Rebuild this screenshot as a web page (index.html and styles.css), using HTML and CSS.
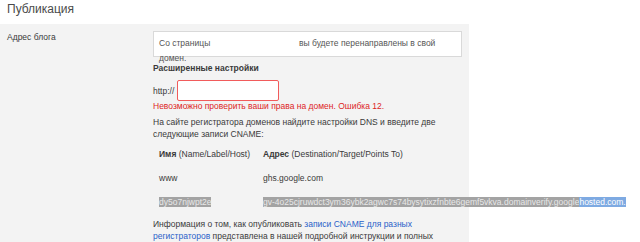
FILE: index.html
```html
<!DOCTYPE html>
<html lang="ru">
<head>
    <meta charset="UTF-8">
    <title>Публикация</title>
    <link rel="stylesheet" href="styles.css">
</head>
<body>
    <h1 class="page-title">Публикация</h1>

    <div class="panel">
        <div class="panel-label">Адрес блога</div>
        <div class="panel-body">
            <div class="redirect-box">
                Со страницы <span class="hidden-url"></span> вы будете перенаправлены в свой домен.
            </div>

            <div class="section-title">Расширенные настройки</div>

            <div class="domain-row">
                <span>http://</span>
                <input type="text" class="domain-input" value="">
            </div>
            <div class="error">Невозможно проверить ваши права на домен. Ошибка 12.</div>

            <p class="hint">На сайте регистратора доменов найдите настройки DNS и введите две следующие записи CNAME:</p>

            <div class="cname">
                <div><b>Имя</b> (Name/Label/Host)</div>
                <div><b>Адрес</b> (Destination/Target/Points To)</div>

                <div>www</div>
                <div>ghs.google.com</div>

                <div><span class="sel">dy5o7njwpt2e</span></div>
                <div><span class="sel">gv-4o25cjruwdct3ym36ybk2agwc7s74bysytixzfnbte6gemf5vkva.domainverify.google</span><span class="sel-active">hosted.com.</span></div>
            </div>

            <p class="info">Информация о том, как опубликовать <a href="#">записи CNAME для разных регистраторов</a> представлена в нашей подробной инструкции и полных</p>
        </div>
    </div>
</body>
</html>
```

FILE: styles.css
```css
body {
    margin: 0;
    font-family: 'Liberation Sans', Arial, sans-serif;
    font-size: 8.5px;
    color: #3a3a3a;
    background: #fff;
    overflow: hidden;
}

.page-title {
    margin: 0;
    padding: 1px 0 0 7px;
    height: 23px;
    line-height: 16px;
    font-size: 12px;
    font-weight: normal;
    color: #4a4a4a;
}

.panel {
    display: flex;
    width: 469px;
    background: #f3f3f3;
    padding-top: 7px;
    height: 300px;
}

.panel-label {
    flex: 0 0 153px;
    padding-left: 7px;
    line-height: 13px;
    box-sizing: border-box;
}

.panel-body {
    flex: 0 0 309px;
    min-width: 0;
}

.redirect-box {
    height: 26px;
    background: #fff;
    border: 1px solid #d9d9d9;
    padding: 4px 8px 0 5px;
    box-sizing: border-box;
    line-height: 15px;
    color: #555;
}

.hidden-url {
    display: inline-block;
    width: 84px;
    height: 10px;
}

.section-title {
    margin-top: 5px;
    line-height: 13px;
    font-weight: bold;
}

.domain-row {
    display: flex;
    align-items: center;
    gap: 3px;
    margin-top: 5px;
}

.domain-input {
    width: 102px;
    height: 21px;
    box-sizing: border-box;
    border: 1px solid #f15b5b;
    border-radius: 2px;
    padding: 0 4px;
    font: inherit;
}

.error {
    color: #dd1f1f;
    line-height: 12px;
    margin-top: -1px;
}

.hint {
    margin: 4px 0 0;
    line-height: 12px;
}

.cname {
    display: grid;
    grid-template-columns: 104px max-content;
    grid-auto-rows: 24px;
    align-items: center;
    padding-left: 6px;
    margin-top: 2px;
    white-space: nowrap;
}

.sel {
    background: #a3a3a3;
    color: #e8e8e8;
}

.sel-active {
    background: #7eaae2;
    color: #fff;
}

.info {
    margin: 4px 0 0;
    line-height: 12px;
}

.info a {
    color: #2a62c9;
    text-decoration: none;
}
```
